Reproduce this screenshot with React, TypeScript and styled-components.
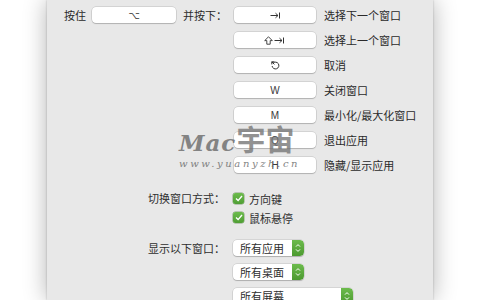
import React from "react";
import styled, { createGlobalStyle } from "styled-components";

const GlobalStyle = createGlobalStyle`
  html, body {
    margin: 0;
    padding: 0;
    background: #ffffff;
  }
  body {
    font-family: "Noto Sans CJK SC", "Noto Sans", sans-serif;
    color: #2e2e2e;
  }
`;

const Page = styled.div`
  width: 480px;
  height: 300px;
  overflow: hidden;
  background: #ffffff;
  display: flex;
  justify-content: flex-start;
`;

const Panel = styled.div`
  position: relative;
  margin-left: 47px;
  width: 386px;
  height: 300px;
  background: #e8e8e8;
  box-shadow: 0 0 22px rgba(0, 0, 0, 0.3), 0 0 2px rgba(0, 0, 0, 0.22);
  box-sizing: border-box;
  padding-top: 7px;
`;

const ShortcutGrid = styled.div`
  display: grid;
  grid-template-columns: 45px 91px 51px 90px 1fr;
  grid-auto-rows: 16px;
  row-gap: 9px;
  align-items: center;
`;

const Label = styled.div<{ $col?: number; $align?: string }>`
  grid-column: ${(p) => p.$col ?? "auto"};
  justify-self: ${(p) => p.$align ?? "start"};
  font-size: 11px;
  line-height: 16px;
  white-space: nowrap;
  color: #2a2a2a;
`;

const KeyBox = styled.div<{ $col: number; $width: number }>`
  grid-column: ${(p) => p.$col};
  width: ${(p) => p.$width}px;
  height: 16px;
  background: #ffffff;
  border-radius: 4px;
  box-shadow: 0 0 0 0.5px rgba(0, 0, 0, 0.18), 0 1px 1px rgba(0, 0, 0, 0.16);
  display: flex;
  align-items: center;
  justify-content: center;
  font-family: "Liberation Sans", "DejaVu Sans", sans-serif;
  font-size: 10px;
  color: #3a3a3a;
`;

const Glyph = styled.span`
  font-family: "DejaVu Sans", sans-serif;
  font-size: 10px;
  color: #333;
`;

const OptionsGrid = styled.div`
  margin-top: 17px;
  display: grid;
  grid-template-columns: 178px 1fr;
  column-gap: 8px;
`;

const OptionGroup = styled.div<{ $gap: number }>`
  display: flex;
  flex-direction: column;
  gap: ${(p) => p.$gap}px;
`;

const OptionLabel = styled.div`
  justify-self: end;
  font-size: 11px;
  line-height: 17px;
  white-space: nowrap;
`;

const CheckRow = styled.div`
  display: flex;
  align-items: center;
  gap: 5px;
  height: 17px;
  font-size: 11px;
`;

const CheckBox = styled.span`
  width: 11px;
  height: 11px;
  border-radius: 2.5px;
  background: linear-gradient(#6cbb4c, #4f9e34);
  display: flex;
  align-items: center;
  justify-content: center;
  box-shadow: 0 0 0 0.5px rgba(40, 90, 20, 0.5);
`;

const Spacer = styled.div`
  grid-column: 1 / span 2;
  height: 14px;
`;

const Popup = styled.div<{ $width: number }>`
  width: ${(p) => p.$width}px;
  height: 16px;
  background: #ffffff;
  border-radius: 4px;
  box-shadow: 0 0 0 0.5px rgba(0, 0, 0, 0.16), 0 1px 1px rgba(0, 0, 0, 0.18);
  display: flex;
  align-items: center;
  justify-content: space-between;
  font-size: 11px;
  padding-left: 7px;
  box-sizing: border-box;
  overflow: hidden;
`;

const Stepper = styled.span`
  width: 12px;
  height: 16px;
  background: linear-gradient(#6cbb4c, #4c9a30);
  border-radius: 0 4px 4px 0;
  display: flex;
  align-items: center;
  justify-content: center;
`;

const Watermark = styled.div`
  position: absolute;
  left: 132px;
  top: 123px;
  pointer-events: none;
  display: flex;
  flex-direction: column;
`;

const WatermarkTitle = styled.div`
  display: flex;
  align-items: baseline;
  opacity: 0.8;
`;

const WatermarkMac = styled.span`
  font-family: "DejaVu Serif", serif;
  font-style: italic;
  font-weight: bold;
  font-size: 23px;
  letter-spacing: 1px;
  color: #6a6a6a;
`;

const WatermarkCn = styled.span`
  font-family: "Noto Sans CJK SC", sans-serif;
  font-weight: bold;
  font-size: 29px;
  line-height: 30px;
  color: #777777;
`;

const WatermarkUrl = styled.span`
  font-family: "DejaVu Serif", serif;
  font-style: italic;
  font-size: 10px;
  letter-spacing: 2.6px;
  color: #6e6e6e;
  margin-top: 2px;
  opacity: 0.85;
`;

const TabIcon = () => (
  <svg width="11" height="7" viewBox="0 0 11 7">
    <path d="M0.5 3.5H8" stroke="#333" strokeWidth="1" />
    <path d="M5.5 1.2L8 3.5L5.5 5.8" stroke="#333" strokeWidth="1" fill="none" />
    <path d="M9.5 0.5V6.5" stroke="#333" strokeWidth="1" />
  </svg>
);

const ShiftTabIcon = () => (
  <svg width="22" height="9" viewBox="0 0 22 9">
    <path
      d="M4.5 0.8L8.3 4.6H6.2V8.2H2.8V4.6H0.7Z"
      stroke="#333"
      strokeWidth="0.9"
      fill="none"
      strokeLinejoin="round"
    />
    <path d="M10.5 4.5H18" stroke="#333" strokeWidth="1" />
    <path d="M15.5 2.2L18 4.5L15.5 6.8" stroke="#333" strokeWidth="1" fill="none" />
    <path d="M19.5 1.5V7.5" stroke="#333" strokeWidth="1" />
  </svg>
);

const EscIcon = () => (
  <svg width="9" height="9" viewBox="0 0 9 9">
    <path
      d="M2 2.2A3.4 3.4 0 1 1 1.1 5"
      stroke="#333"
      strokeWidth="1"
      fill="none"
    />
    <path d="M0.8 0.8L3.4 3.4" stroke="#333" strokeWidth="1" />
    <path d="M0.8 3.4V0.8H3.4" stroke="#333" strokeWidth="1" fill="none" />
  </svg>
);

const CheckMark = () => (
  <svg width="8" height="7" viewBox="0 0 8 7">
    <path d="M1 3.6L3.1 5.6L7 1" stroke="#fff" strokeWidth="1.4" fill="none" />
  </svg>
);

const Arrows = () => (
  <svg width="6" height="10" viewBox="0 0 6 10">
    <path d="M1 3.6L3 1.6L5 3.6" stroke="#fff" strokeWidth="1" fill="none" />
    <path d="M1 6.4L3 8.4L5 6.4" stroke="#fff" strokeWidth="1" fill="none" />
  </svg>
);

interface IShortcut {
  key: React.ReactNode;
  action: string;
}

const shortcuts: IShortcut[] = [
  { key: <TabIcon />, action: "选择下一个窗口" },
  { key: <ShiftTabIcon />, action: "选择上一个窗口" },
  { key: <EscIcon />, action: "取消" },
  { key: "W", action: "关闭窗口" },
  { key: "M", action: "最小化/最大化窗口" },
  { key: "Q", action: "退出应用" },
  { key: "H", action: "隐藏/显示应用" },
];

const popups = [
  { label: "所有应用", width: 71 },
  { label: "所有桌面", width: 71 },
  { label: "所有屏幕", width: 120 },
];

function App() {
  return (
    <>
      <GlobalStyle />
      <Page>
        <Panel>
          <ShortcutGrid>
            {shortcuts.map((s, i) => (
              <React.Fragment key={s.action}>
                {i === 0 && (
                  <>
                    <Label $col={1} $align="end" style={{ marginRight: 6 }}>
                      按住
                    </Label>
                    <KeyBox $col={2} $width={84}>
                      <Glyph>⌥</Glyph>
                    </KeyBox>
                    <Label $col={3}>并按下：</Label>
                  </>
                )}
                <KeyBox $col={4} $width={82}>
                  {s.key}
                </KeyBox>
                <Label $col={5}>{s.action}</Label>
              </React.Fragment>
            ))}
          </ShortcutGrid>

          <OptionsGrid>
            <OptionLabel>切换窗口方式：</OptionLabel>
            <OptionGroup $gap={2}>
              <CheckRow>
                <CheckBox>
                  <CheckMark />
                </CheckBox>
                方向键
              </CheckRow>
              <CheckRow>
                <CheckBox>
                  <CheckMark />
                </CheckBox>
                鼠标悬停
              </CheckRow>
            </OptionGroup>

            <Spacer />

            <OptionLabel>显示以下窗口：</OptionLabel>
            <OptionGroup $gap={8}>
              {popups.map((p) => (
                <Popup key={p.label} $width={p.width}>
                  {p.label}
                  <Stepper>
                    <Arrows />
                  </Stepper>
                </Popup>
              ))}
            </OptionGroup>
          </OptionsGrid>

          <Watermark>
            <WatermarkTitle>
              <WatermarkMac>Mac</WatermarkMac>
              <WatermarkCn>宇宙</WatermarkCn>
            </WatermarkTitle>
            <WatermarkUrl>www.yuanyzh.cn</WatermarkUrl>
          </Watermark>
        </Panel>
      </Page>
    </>
  );
}

export default App;
